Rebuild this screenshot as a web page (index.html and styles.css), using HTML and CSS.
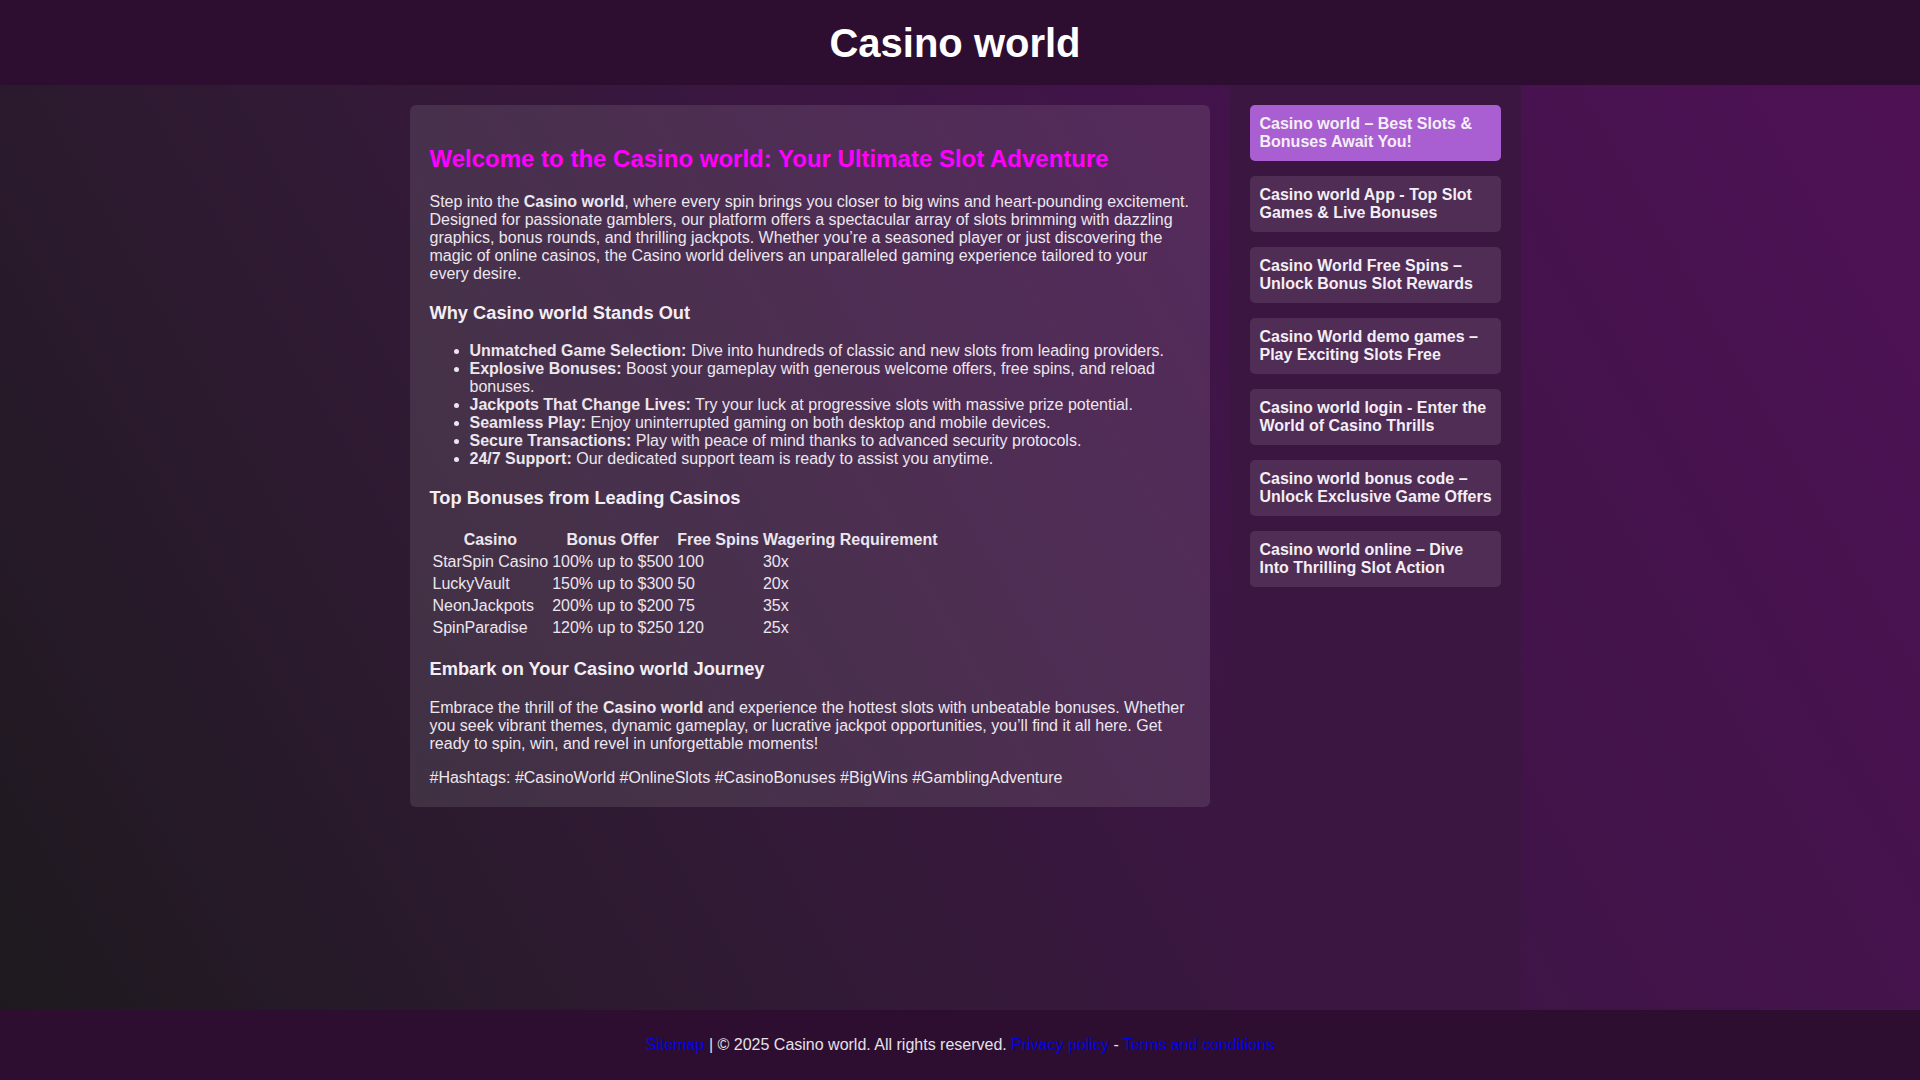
FILE: index.html
```html
<!DOCTYPE html>
<html lang="en">
<head>
<meta charset="utf-8">
<title>Casino world</title>
<link rel="stylesheet" href="styles.css">
</head>
<body>
<header class="site-header">
  <h1 class="site-title">Casino world</h1>
</header>
<div class="main-wrap">
  <main class="content-card">
    <h2 class="page-title">Welcome to the Casino world: Your Ultimate Slot Adventure</h2>
    <p>Step into the <strong>Casino world</strong>, where every spin brings you closer to big wins and heart-pounding excitement. Designed for passionate gamblers, our platform offers a spectacular array of slots brimming with dazzling graphics, bonus rounds, and thrilling jackpots. Whether you’re a seasoned player or just discovering the magic of online casinos, the Casino world delivers an unparalleled gaming experience tailored to your every desire.</p>
    <h3>Why Casino world Stands Out</h3>
    <ul>
      <li><strong>Unmatched Game Selection:</strong> Dive into hundreds of classic and new slots from leading providers.</li>
      <li><strong>Explosive Bonuses:</strong> Boost your gameplay with generous welcome offers, free spins, and reload bonuses.</li>
      <li><strong>Jackpots That Change Lives:</strong> Try your luck at progressive slots with massive prize potential.</li>
      <li><strong>Seamless Play:</strong> Enjoy uninterrupted gaming on both desktop and mobile devices.</li>
      <li><strong>Secure Transactions:</strong> Play with peace of mind thanks to advanced security protocols.</li>
      <li><strong>24/7 Support:</strong> Our dedicated support team is ready to assist you anytime.</li>
    </ul>
    <h3>Top Bonuses from Leading Casinos</h3>
    <table class="bonus-table">
      <thead>
        <tr><th>Casino</th><th>Bonus Offer</th><th>Free Spins</th><th>Wagering Requirement</th></tr>
      </thead>
      <tbody>
        <tr><td>StarSpin Casino</td><td>100% up to $500</td><td>100</td><td>30x</td></tr>
        <tr><td>LuckyVault</td><td>150% up to $300</td><td>50</td><td>20x</td></tr>
        <tr><td>NeonJackpots</td><td>200% up to $200</td><td>75</td><td>35x</td></tr>
        <tr><td>SpinParadise</td><td>120% up to $250</td><td>120</td><td>25x</td></tr>
      </tbody>
    </table>
    <h3>Embark on Your Casino world Journey</h3>
    <p>Embrace the thrill of the <strong>Casino world</strong> and experience the hottest slots with unbeatable bonuses. Whether you seek vibrant themes, dynamic gameplay, or lucrative jackpot opportunities, you’ll find it all here. Get ready to spin, win, and revel in unforgettable moments!</p>
    <p class="hashtags">#Hashtags: #CasinoWorld #OnlineSlots #CasinoBonuses #BigWins #GamblingAdventure</p>
  </main>
  <aside class="sidebar">
    <a class="side-link active" href="#">Casino world – Best Slots &amp; Bonuses Await You!</a>
    <a class="side-link" href="#">Casino world App - Top Slot Games &amp; Live Bonuses</a>
    <a class="side-link" href="#">Casino World Free Spins – Unlock Bonus Slot Rewards</a>
    <a class="side-link" href="#">Casino World demo games – Play Exciting Slots Free</a>
    <a class="side-link" href="#">Casino world login - Enter the World of Casino Thrills</a>
    <a class="side-link" href="#">Casino world bonus code – Unlock Exclusive Game Offers</a>
    <a class="side-link" href="#">Casino world online – Dive Into Thrilling Slot Action</a>
  </aside>
</div>
<footer class="site-footer">
  <p><a href="#">Sitemap</a> | © 2025 Casino world. All rights reserved. <a href="#">Privacy policy</a> - <a href="#">Terms and conditions</a></p>
</footer>
</body>
</html>
```
FILE: styles.css
```css
body {
  margin: 0;
  min-height: 100vh;
  display: flex;
  flex-direction: column;
  font-family: Arial, "Liberation Sans", sans-serif;
  font-size: 16px;
  color: #ece6ee;
  background: #2d0e30;
}
.site-header {
  background: #2d0e30;
  padding: 21px 10px 19px 0;
  text-align: center;
}
.site-title {
  margin: 0;
  font-size: 40px;
  font-weight: bold;
  color: #ffffff;
}
.main-wrap {
  flex: 1;
  box-sizing: border-box;
  padding-left: 10px;
  display: flex;
  justify-content: center;
  align-items: stretch;
  gap: 20px;
  background: linear-gradient(60deg, #1e191f 0%, #321a36 35%, #401448 65%, #4e1155 100%);
}
.content-card {
  box-sizing: border-box;
  width: 800px;
  align-self: flex-start;
  margin-top: 20px;
  padding: 20px;
  background: rgba(255, 255, 255, 0.1);
  border-radius: 6px;
}
.page-title {
  color: #ff00ff;
  font-size: 24px;
}
.content-card h3 {
  color: #f3eef4;
  font-size: 18.25px;
  line-height: 22px;
  margin: 18.72px 0;
}
.content-card p.hashtags {
  margin-bottom: 0;
}
.bonus-table th,
.bonus-table td {
  text-align: left;
}
.bonus-table th {
  text-align: center;
}
.sidebar {
  box-sizing: border-box;
  width: 291px;
  padding: 20px;
  background: #3b1640;
  display: flex;
  flex-direction: column;
  gap: 15px;
}
.side-link {
  display: block;
  width: 251px;
  box-sizing: border-box;
  padding: 10px 4px 10px 10px;
  border-radius: 5px;
  background: #4f2d54;
  color: #f4eef6;
  font-weight: bold;
  font-size: 16px;
  line-height: 18px;
  text-decoration: none;
}
.side-link.active {
  background: #a95fd1;
}
.site-footer {
  background: #2d0e30;
  text-align: center;
  padding: 10px 0;
  color: #e6e0e8;
}
.site-footer a {
  color: #0000ee;
}
```
